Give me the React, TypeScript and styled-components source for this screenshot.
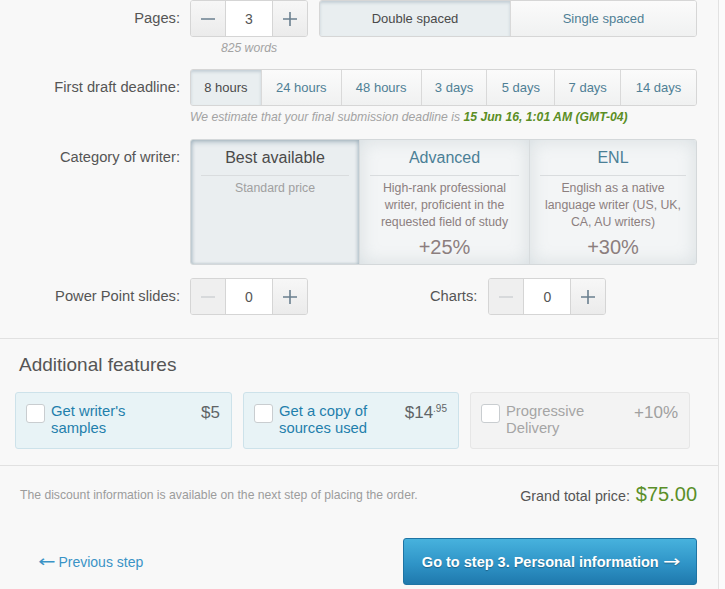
import styled, { createGlobalStyle, css } from 'styled-components';

const Global = createGlobalStyle`
  html, body {
    margin: 0;
    padding: 0;
    background: #fbfbfb;
    font-family: "Liberation Sans", Arial, sans-serif;
  }
`;

const Panel = styled.div`
  width: 718px;
  min-height: 589px;
  background: #f8f8f8;
  border-right: 1px solid #e2e2e2;
`;

const Section = styled.div<{ $top?: number; $bottom?: number }>`
  padding-top: ${(p) => p.$top ?? 0}px;
  padding-bottom: ${(p) => p.$bottom ?? 0}px;
  border-bottom: 1px solid #e1e1e1;
`;

const Row = styled.div<{ $mt?: number }>`
  display: grid;
  grid-template-columns: 180px 507px;
  column-gap: 10px;
  margin-top: ${(p) => p.$mt ?? 0}px;
`;

const Label = styled.div`
  text-align: right;
  font-size: 14.7px;
  color: #555;
  line-height: 37px;
  height: 37px;
  white-space: nowrap;
`;

const Controls = styled.div`
  display: flex;
  align-items: flex-start;
`;

const Stack = styled.div`
  display: flex;
  flex-direction: column;
`;

const Note = styled.div<{ $center?: boolean }>`
  font-size: 12.2px;
  font-style: italic;
  color: #a3a3a3;
  line-height: 16px;
  margin-top: 3px;
  text-align: ${(p) => (p.$center ? 'center' : 'left')};
  white-space: nowrap;
  b {
    color: #5b8e25;
  }
`;

const Stepper = styled.div`
  display: flex;
  height: 37px;
  box-sizing: border-box;
  border: 1px solid #d5d5d5;
  border-radius: 3px;
  overflow: hidden;
`;

const StepButton = styled.div<{ $disabled?: boolean; $w: number }>`
  width: ${(p) => p.$w}px;
  display: flex;
  align-items: center;
  justify-content: center;
  background: ${(p) => (p.$disabled ? '#efefef' : 'linear-gradient(#f7f7f7, #ebebeb)')};
  color: ${(p) => (p.$disabled ? '#cfd2d4' : '#6a7f8f')};
`;

const StepInput = styled.div`
  width: 46px;
  background: #fff;
  border-left: 1px solid #d5d5d5;
  border-right: 1px solid #d5d5d5;
  display: flex;
  align-items: center;
  justify-content: center;
  font-size: 14px;
  color: #555;
`;

const Group = styled.div`
  display: flex;
  height: 37px;
  box-sizing: border-box;
  border: 1px solid #d6d6d6;
  border-radius: 3px;
  overflow: hidden;
`;

const activeFill = css`
  background: #e9eef0;
  box-shadow: inset 0 2px 3px rgba(90, 120, 140, 0.25);
  color: #4a4a4a;
`;

const GroupItem = styled.div<{ $w: number; $active?: boolean }>`
  width: ${(p) => p.$w}px;
  display: flex;
  align-items: center;
  justify-content: center;
  font-size: 13px;
  color: #4f7f95;
  background: linear-gradient(#fbfbfb, #f0f1f1);
  & + & {
    border-left: 1px solid #d9d9d9;
  }
  ${(p) => p.$active && activeFill}
`;

const Cards = styled.div`
  display: flex;
  height: 126px;
  box-sizing: border-box;
  border: 1px solid #d4d8da;
  border-radius: 3px;
  overflow: hidden;
`;

const Card = styled.div<{ $w: number; $active?: boolean }>`
  width: ${(p) => p.$w}px;
  box-sizing: border-box;
  padding: 8px 10px 0;
  display: flex;
  flex-direction: column;
  align-items: stretch;
  text-align: center;
  background: #f3f5f6;
  box-shadow: inset 0 0 18px rgba(120, 140, 150, 0.22);
  & + & {
    border-left: 1px solid #d7dbdd;
  }
  ${(p) =>
    p.$active &&
    css`
      background: #eaeef0;
      box-shadow: inset 0 3px 4px rgba(90, 120, 140, 0.3), inset 2px 0 3px rgba(90, 120, 140, 0.2),
        inset -2px 0 3px rgba(90, 120, 140, 0.2);
    `}
`;

const CardTitle = styled.div<{ $active?: boolean }>`
  font-size: 16px;
  line-height: 20px;
  color: ${(p) => (p.$active ? '#4a4a4a' : '#4b7f96')};
  padding-bottom: 7px;
  border-bottom: 1px solid #d9dcde;
`;

const CardText = styled.div<{ $muted?: boolean }>`
  font-size: 12.3px;
  line-height: 17px;
  color: ${(p) => (p.$muted ? '#a0a0a0' : '#8c7f7f')};
  margin-top: 4px;
`;

const CardPrice = styled.div`
  font-size: 20px;
  color: #8c7e7e;
  margin-top: 5px;
`;

const ChartsGroup = styled.div`
  display: flex;
  margin-left: 122px;
  gap: 11px;
`;

const Heading = styled.div`
  font-size: 19px;
  line-height: 22px;
  color: #555;
  padding-left: 19px;
`;

const Features = styled.div`
  display: flex;
  gap: 11px;
  margin-top: 16px;
  padding-left: 15px;
`;

const Feature = styled.div<{ $w: number; $off?: boolean }>`
  width: ${(p) => p.$w}px;
  height: 57px;
  box-sizing: border-box;
  display: flex;
  align-items: flex-start;
  padding: 10px 11px 0 10px;
  border-radius: 3px;
  border: 1px solid ${(p) => (p.$off ? '#e6e6e6' : '#cde2ea')};
  background: ${(p) => (p.$off ? '#f3f3f3' : '#e8f3f6')};
  color: ${(p) => (p.$off ? '#a5a5a5' : '#1f7fac')};
`;

const Box = styled.div`
  width: 19px;
  height: 19px;
  box-sizing: border-box;
  flex: none;
  background: #fff;
  border: 1px solid #c9cdd0;
  border-radius: 3px;
  margin-top: 1px;
  margin-right: 6px;
`;

const FeatureName = styled.div`
  flex: 0 0 118px;
  font-size: 14.8px;
  line-height: 17px;
`;

const FeaturePrice = styled.div<{ $off?: boolean }>`
  margin-left: auto;
  font-size: 17px;
  color: ${(p) => (p.$off ? '#a0a0a0' : '#5f6466')};
  white-space: nowrap;
  sup {
    font-size: 10px;
    vertical-align: 6px;
  }
`;

const Footer = styled.div`
  padding: 17px 21px 0 20px;
`;

const TotalLine = styled.div`
  display: flex;
  justify-content: space-between;
  align-items: flex-end;
`;

const Disclaimer = styled.div`
  font-size: 12.2px;
  color: #9c9c9c;
  padding-bottom: 4px;
`;

const Total = styled.div`
  font-size: 14.3px;
  color: #555;
  span {
    font-size: 20px;
    color: #5a8f29;
    margin-left: 2px;
  }
`;

const Nav = styled.div`
  display: flex;
  justify-content: space-between;
  align-items: center;
  margin-top: 32px;
  padding-left: 20px;
`;

const Arrow = styled.span`
  font-family: "DejaVu Sans", sans-serif;
  font-weight: normal;
  font-size: 16px;
  display: inline-block;
  transform: scaleX(1.3);
`;

const BackLink = styled.a`
  font-size: 14px;
  color: #3a93c6;
  text-decoration: none;
  ${Arrow} {
    margin-right: 5px;
  }
`;

const NextButton = styled.button`
  width: 294px;
  height: 47px;
  border: 1px solid #1e74a4;
  border-radius: 3px;
  background: linear-gradient(#47b2dd, #2f94c7 55%, #1f79ad);
  color: #fff;
  font-family: "Liberation Sans", Arial, sans-serif;
  font-weight: bold;
  font-size: 14.5px;
  text-shadow: 0 1px 1px rgba(0, 0, 0, 0.3);
  ${Arrow} {
    margin-left: 6px;
  }
`;

const Minus = () => (
  <svg width="16" height="16" viewBox="0 0 16 16">
    <path d="M1 8h14" stroke="currentColor" strokeWidth="1.6" />
  </svg>
);

const Plus = () => (
  <svg width="16" height="16" viewBox="0 0 16 16">
    <path d="M1 8h14M8 1v14" stroke="currentColor" strokeWidth="1.6" />
  </svg>
);

const Counter = ({ value, min }: { value: number; min?: boolean }) => (
  <Stepper>
    <StepButton $w={34} $disabled={min}>
      <Minus />
    </StepButton>
    <StepInput>{value}</StepInput>
    <StepButton $w={34}>
      <Plus />
    </StepButton>
  </Stepper>
);

const deadlines: [string, number][] = [
  ['8 hours', 71],
  ['24 hours', 80],
  ['48 hours', 80],
  ['3 days', 66],
  ['5 days', 68],
  ['7 days', 66],
  ['14 days', 76],
];

export default function App() {
  return (
    <>
      <Global />
      <Panel>
        <Section $bottom={23}>
          <Row>
            <Label>Pages:</Label>
            <Controls>
              <Stack>
                <Counter value={3} />
                <Note $center>825 words</Note>
              </Stack>
              <Group style={{ marginLeft: 11 }}>
                <GroupItem $w={191} $active>
                  Double spaced
                </GroupItem>
                <GroupItem $w={186}>Single spaced</GroupItem>
              </Group>
            </Controls>
          </Row>
          <Row $mt={13}>
            <Label>First draft deadline:</Label>
            <Stack>
              <Group>
                {deadlines.map(([t, w], i) => (
                  <GroupItem key={t} $w={w - 1} $active={i === 0}>
                    {t}
                  </GroupItem>
                ))}
              </Group>
              <Note>
                We estimate that your final submission deadline is <b>15 Jun 16, 1:01 AM (GMT-04)</b>
              </Note>
            </Stack>
          </Row>
          <Row $mt={14}>
            <Label>Category of writer:</Label>
            <Cards>
              <Card $w={168} $active>
                <CardTitle $active>Best available</CardTitle>
                <CardText $muted>Standard price</CardText>
              </Card>
              <Card $w={170}>
                <CardTitle>Advanced</CardTitle>
                <CardText>High-rank professional writer, proficient in the requested field of study</CardText>
                <CardPrice>+25%</CardPrice>
              </Card>
              <Card $w={167}>
                <CardTitle>ENL</CardTitle>
                <CardText>English as a native language writer (US, UK, CA, AU writers)</CardText>
                <CardPrice>+30%</CardPrice>
              </Card>
            </Cards>
          </Row>
          <Row $mt={13}>
            <Label>Power Point slides:</Label>
            <Controls>
              <Counter value={0} min />
              <ChartsGroup>
                <Label>Charts:</Label>
                <Counter value={0} min />
              </ChartsGroup>
            </Controls>
          </Row>
        </Section>
        <Section $top={15} $bottom={16}>
          <Heading>Additional features</Heading>
          <Features>
            <Feature $w={217}>
              <Box />
              <FeatureName>Get writer's samples</FeatureName>
              <FeaturePrice>$5</FeaturePrice>
            </Feature>
            <Feature $w={216}>
              <Box />
              <FeatureName>Get a copy of sources used</FeatureName>
              <FeaturePrice>
                $14<sup>.95</sup>
              </FeaturePrice>
            </Feature>
            <Feature $w={220} $off>
              <Box />
              <FeatureName>Progressive Delivery</FeatureName>
              <FeaturePrice $off>+10%</FeaturePrice>
            </Feature>
          </Features>
        </Section>
        <Footer>
          <TotalLine>
            <Disclaimer>The discount information is available on the next step of placing the order.</Disclaimer>
            <Total>
              Grand total price: <span>$75.00</span>
            </Total>
          </TotalLine>
          <Nav>
            <BackLink href="#">
              <Arrow>←</Arrow>Previous step
            </BackLink>
            <NextButton>
              Go to step 3. Personal information<Arrow>→</Arrow>
            </NextButton>
          </Nav>
        </Footer>
      </Panel>
    </>
  );
}
